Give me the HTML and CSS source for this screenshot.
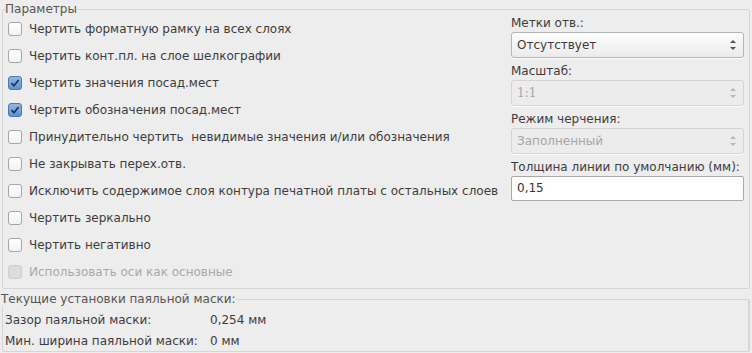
FILE: index.html
```html
<!DOCTYPE html>
<html lang="ru">
<head>
    <meta charset="UTF-8">
    <title>Параметры</title>
    <link rel="stylesheet" href="styles.css">
</head>
<body>
    <fieldset class="group main">
        <legend>Параметры</legend>
        <div class="cols">
            <div class="checks">
                <label class="check"><span class="box"></span>Чертить форматную рамку на всех слоях</label>
                <label class="check"><span class="box"></span>Чертить конт.пл. на слое шелкографии</label>
                <label class="check"><span class="box on"><svg viewBox="0 0 14 14"><path d="M3 7.2 L5.8 10.2 L11.2 3.4" fill="none" stroke="#1d3350" stroke-width="2"/></svg></span>Чертить значения посад.мест</label>
                <label class="check"><span class="box on"><svg viewBox="0 0 14 14"><path d="M3 7.2 L5.8 10.2 L11.2 3.4" fill="none" stroke="#1d3350" stroke-width="2"/></svg></span>Чертить обозначения посад.мест</label>
                <label class="check"><span class="box"></span>Принудительно чертить&nbsp; невидимые значения и/или обозначения</label>
                <label class="check"><span class="box"></span>Не закрывать перех.отв.</label>
                <label class="check"><span class="box"></span>Исключить содержимое слоя контура печатной платы с остальных слоев</label>
                <label class="check"><span class="box"></span>Чертить зеркально</label>
                <label class="check"><span class="box"></span>Чертить негативно</label>
                <label class="check disabled"><span class="box"></span>Использовать оси как основные</label>
            </div>
            <div class="side">
                <div class="field-label">Метки отв.:</div>
                <div class="combo">
                    <span>Отсутствует</span>
                    <span class="arrows"><i class="up"></i><i class="down"></i></span>
                </div>
                <div class="field-label">Масштаб:</div>
                <div class="combo disabled serif">
                    <span>1:1</span>
                    <span class="arrows"><i class="up"></i><i class="down"></i></span>
                </div>
                <div class="field-label">Режим черчения:</div>
                <div class="combo disabled">
                    <span>Заполненный</span>
                    <span class="arrows"><i class="up"></i><i class="down"></i></span>
                </div>
                <div class="field-label">Толщина линии по умолчанию (мм):</div>
                <div class="entry">0,15</div>
            </div>
        </div>
    </fieldset>

    <fieldset class="group mask">
        <legend>Текущие установки паяльной маски:</legend>
        <div class="mask-row"><span class="mask-name">Зазор паяльной маски:</span><span>0,254 мм</span></div>
        <div class="mask-row"><span class="mask-name">Мин. ширина паяльной маски:</span><span>0 мм</span></div>
    </fieldset>
</body>
</html>
```

FILE: styles.css
```css
body {
    margin: 0;
    padding: 2px 2px 0 2px;
    background-color: #ededed;
    font-family: "DejaVu Sans", sans-serif;
    font-size: 12px;
    color: #3c3c3c;
}
.group {
    margin: 0;
    border: 1px solid #d6d6d6;
    border-radius: 2px;
    padding: 0;
    min-width: 0;
}
.group legend {
    padding: 0;
    margin-left: 2px;
    color: #555;
    line-height: 14px;
}
.main {
    height: 287px;
    box-sizing: border-box;
}
.cols {
    display: flex;
    justify-content: space-between;
    margin-top: -1px;
}
.checks {
    display: flex;
    flex-direction: column;
    padding-left: 5px;
}
.check {
    display: flex;
    align-items: center;
    gap: 7px;
    height: 27px;
    white-space: nowrap;
}
.check.disabled {
    color: #a9a9a9;
}
.box {
    width: 12px;
    height: 12px;
    border: 1px solid #a6a6a6;
    border-radius: 3px;
    background: linear-gradient(#ffffff, #f2f2f2);
    display: flex;
}
.box svg {
    width: 12px;
    height: 12px;
}
.box.on {
    background: linear-gradient(#8fb8e6, #5e93d1);
    border-color: #4a78b0;
}
.check.disabled .box {
    background: #dcdcdc;
    border-color: #cfcfcf;
}
.side {
    width: 233px;
    padding-right: 5px;
}
.field-label {
    line-height: 16px;
    margin-bottom: 1px;
}
.combo {
    display: flex;
    justify-content: space-between;
    align-items: center;
    height: 24px;
    border: 1px solid #b5b5b5;
    border-radius: 3px;
    background: linear-gradient(#fdfdfd, #ebebeb);
    padding: 0 7px 0 5px;
    margin-bottom: 5px;
    box-shadow: 0 1px 0 rgba(255, 255, 255, 0.8);
}
.combo.disabled {
    background: #ececec;
    border-color: #d4d4d4;
    color: #a6a6a6;
}
.combo.serif span:first-child {
    font-family: "DejaVu Serif", serif;
}
.arrows {
    display: flex;
    flex-direction: column;
    gap: 4px;
}
.arrows i {
    width: 0;
    height: 0;
    border-left: 3px solid transparent;
    border-right: 3px solid transparent;
}
.arrows .up {
    border-bottom: 3px solid #555;
}
.arrows .down {
    border-top: 3px solid #555;
}
.combo.disabled .arrows .up {
    border-bottom-color: #b8b8b8;
}
.combo.disabled .arrows .down {
    border-top-color: #b8b8b8;
}
.entry {
    height: 23px;
    line-height: 23px;
    border: 1px solid #a9a9a9;
    border-radius: 2px;
    background: #fff;
    padding: 0 5px;
    color: #333;
}
.mask {
    margin-top: 3px;
    height: 60px;
    box-sizing: border-box;
    border-right: 2px solid #d6d6d6;
}
.mask legend {
    margin-left: -2px;
}
.mask-row {
    display: flex;
    padding-left: 2px;
    line-height: 21px;
}
.mask-row:first-of-type {
    margin-top: 4px;
}
.mask-name {
    width: 205px;
}
```
